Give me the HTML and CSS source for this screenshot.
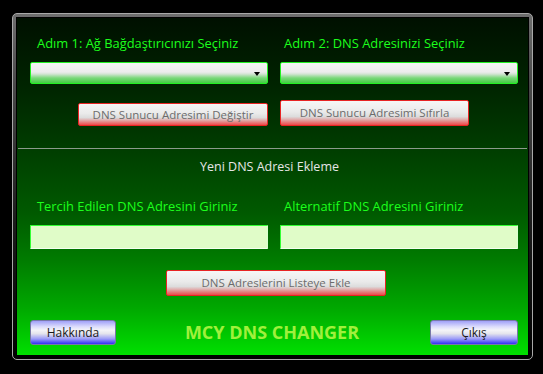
FILE: index.html
```html
<!DOCTYPE html>
<html lang="tr">
<head>
<meta charset="utf-8">
<title>MCY DNS CHANGER</title>
<link rel="stylesheet" href="styles.css">
</head>
<body>
<div class="frame">
  <div class="panel">
    <div class="pair labels top-labels">
      <span class="lbl lbl-left">Adım 1: Ağ Bağdaştırıcınızı Seçiniz</span>
      <span class="lbl lbl-right">Adım 2: DNS Adresinizi Seçiniz</span>
    </div>
    <div class="pair combos">
      <div class="combo"><span class="arrow"></span></div>
      <div class="combo"><span class="arrow"></span></div>
    </div>
    <div class="pair actions">
      <button class="btn red change">DNS Sunucu Adresimi Değiştir</button>
      <button class="btn red reset">DNS Sunucu Adresimi Sıfırla</button>
    </div>
    <div class="divider"></div>
    <div class="heading">Yeni DNS Adresi Ekleme</div>
    <div class="pair labels second-labels">
      <span class="lbl lbl-left">Tercih Edilen DNS Adresini Giriniz</span>
      <span class="lbl lbl-right">Alternatif DNS Adresini Giriniz</span>
    </div>
    <div class="pair inputs">
      <div class="textbox"></div>
      <div class="textbox"></div>
    </div>
    <div class="addrow">
      <button class="btn red add">DNS Adreslerini Listeye Ekle</button>
    </div>
    <div class="bottom">
      <button class="btn blue about">Hakkında</button>
      <span class="brand">MCY DNS CHANGER</span>
      <button class="btn blue quit">Çıkış</button>
    </div>
  </div>
</div>
</body>
</html>
```

FILE: styles.css
```css
* { box-sizing: border-box; }

html, body {
  margin: 0;
  background: #000;
}

body {
  padding: 13px 0 0 12px;
  font-family: "Open Sans", "Noto Sans", sans-serif;
}

.frame {
  width: 521px;
  height: 347px;
  border: 1px solid #a8a8a8;
  border-radius: 5px;
  padding: 3px;
  background: linear-gradient(to bottom, #6e6e6e 0%, #4a4a4a 20%, #1c1c1c 60%, #000 100%);
}

.panel {
  width: 513px;
  height: 339px;
  border: 1px solid #000;
  padding: 0 0 0 13px;
  background: linear-gradient(to bottom,
    #001000 0%,
    #002400 20%,
    #003c00 38%,
    #005a00 58%,
    #007c00 72%,
    #00a800 86%,
    #00e000 100%);
}

.pair {
  display: grid;
  grid-template-columns: 238px 238px;
  column-gap: 12px;
}

.labels {
  height: 16px;
  line-height: 16px;
  font-size: 12.9px;
  color: #1cff1c;
  white-space: nowrap;
}

.top-labels { margin-top: 17px; }
.second-labels { margin-top: 23px; }

.lbl-left { padding-left: 7px; }
.lbl-right { padding-left: 4px; }

.combos { margin-top: 11px; }

.combo {
  position: relative;
  height: 22px;
  border: 1px solid #22f022;
  border-radius: 2px;
  background: linear-gradient(to bottom,
    #f4f4f4 0%,
    #ececec 45%,
    #d4e4d4 55%,
    #7ad87a 75%,
    #44cc44 100%);
}

.arrow {
  position: absolute;
  right: 7px;
  top: 9px;
  width: 0;
  height: 0;
  border-left: 3px solid transparent;
  border-right: 3px solid transparent;
  border-top: 4px solid #000;
}

.actions {
  margin-top: 16px;
  height: 26px;
  align-items: end;
}

.btn {
  margin: 0;
  padding: 0;
  font-family: "Open Sans", "Noto Sans", sans-serif;
  font-size: 11.5px;
  line-height: 1;
  cursor: default;
}

.red {
  border: 1px solid #e82424;
  border-radius: 2px;
  color: #6c6c6c;
  background: linear-gradient(to bottom,
    #f6f6f6 0%,
    #eaeaea 45%,
    #dcdcdc 65%,
    #e2a0a0 80%,
    #ee4848 100%);
}

.change {
  justify-self: end;
  width: 190px;
  height: 23px;
}

.reset {
  justify-self: start;
  width: 189px;
  height: 26px;
}

.divider {
  margin: 22px 0 0 -12px;
  width: 509px;
  height: 1px;
  background: #8c9a8c;
}

.heading {
  margin-top: 10px;
  margin-left: -13px;
  height: 16px;
  line-height: 16px;
  text-align: center;
  padding-right: 6px;
  font-size: 12.5px;
  color: #e6e6e6;
}

.inputs { margin-top: 11px; }

.textbox {
  height: 24px;
  border: 1px solid;
  border-color: #33ff33 #d8ffd0 #f4fff0 #33ff33;
  border-radius: 1px;
  background: #e0fcc8;
}

.addrow {
  margin-top: 21px;
  padding-left: 136px;
}

.add {
  width: 220px;
  height: 26px;
}

.bottom {
  margin-top: 24px;
  display: flex;
  align-items: center;
  width: 488px;
  height: 25px;
}

.blue {
  height: 25px;
  border: 1px solid #7878a8;
  border-radius: 3px;
  color: #1a1a1a;
  font-size: 12px;
  background: linear-gradient(to bottom,
    #a0a0f8 0%,
    #dcdcfc 25%,
    #f4f4f8 40%,
    #e4e4ec 55%,
    #9a9af8 78%,
    #3030f4 100%);
}

.about { width: 86px; }
.quit { width: 88px; }

.brand {
  flex: 1;
  text-align: center;
  padding-right: 2px;
  font-size: 18px;
  font-weight: 700;
  color: #a0f03c;
  line-height: 25px;
}
```
